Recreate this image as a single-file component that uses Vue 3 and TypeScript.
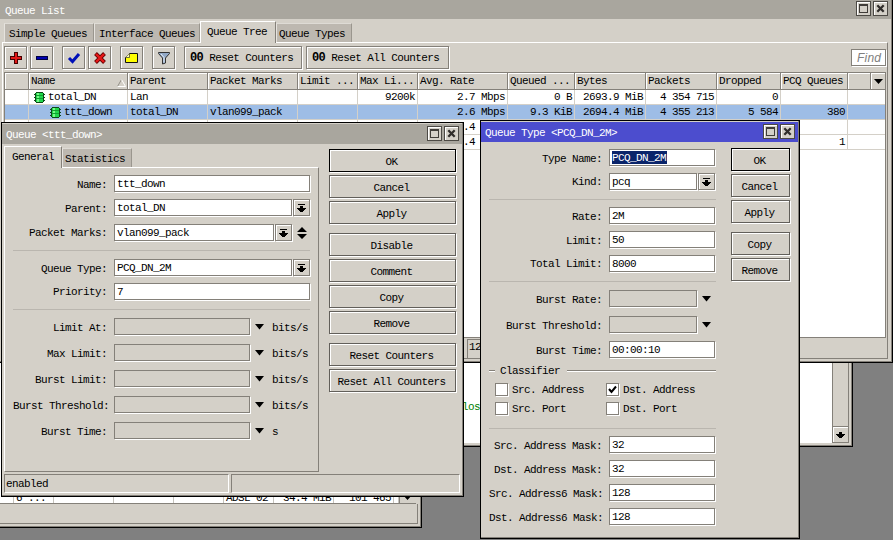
<script setup lang="ts">
interface Column { title: string; key: string; sorted?: boolean; right?: boolean }
interface Field { label: string; value?: string; kind: 'text' | 'drop' | 'multi' | 'off'; unit?: string; cls?: string; selected?: boolean }
interface Action { text: string; cls?: string }

const columns: Column[] = [
  { title: '', key: 'flag' },
  { title: 'Name', key: 'name', sorted: true },
  { title: 'Parent', key: 'parent' },
  { title: 'Packet Marks', key: 'marks' },
  { title: 'Limit ...', key: 'limit', right: true },
  { title: 'Max Li...', key: 'max', right: true },
  { title: 'Avg. Rate', key: 'rate', right: true },
  { title: 'Queued ...', key: 'queued', right: true },
  { title: 'Bytes', key: 'bytes', right: true },
  { title: 'Packets', key: 'packets', right: true },
  { title: 'Dropped', key: 'dropped', right: true },
  { title: 'PCQ Queues', key: 'pcq', right: true },
]

const rows: Record<string, string>[] = [
  { name: 'total_DN', parent: 'Lan', max: '9200k', rate: '2.7 Mbps', queued: '0 B', bytes: '2693.9 MiB', packets: '4 354 715', dropped: '0' },
  { name: 'ttt_down', parent: 'total_DN', marks: 'vlan099_pack', rate: '2.6 Mbps', queued: '9.3 KiB', bytes: '2694.4 MiB', packets: '4 355 213', dropped: '5 584', pcq: '380', child: 'y' },
  { name: '', rate: '.4', part: 'y' },
  { name: '', rate: '.4', pcq: '1', part: 'y' },
]

const queueFields: Field[] = [
  { label: 'Name', value: 'ttt_down', kind: 'text' },
  { label: 'Parent', value: 'total_DN', kind: 'drop', cls: 'gap7' },
  { label: 'Packet Marks', value: 'vlan099_pack', kind: 'multi', cls: 'rule17' },
  { label: 'Queue Type', value: 'PCQ_DN_2M', kind: 'drop' },
  { label: 'Priority', value: '7', kind: 'text', cls: 'rule17' },
  { label: 'Limit At', kind: 'off', unit: 'bits/s' },
  { label: 'Max Limit', kind: 'off', unit: 'bits/s' },
  { label: 'Burst Limit', kind: 'off', unit: 'bits/s' },
  { label: 'Burst Threshold', kind: 'off', unit: 'bits/s' },
  { label: 'Burst Time', kind: 'off', unit: 's' },
]

const queueActions: Action[] = [
  { text: 'OK', cls: 'primary' }, { text: 'Cancel' }, { text: 'Apply', cls: 'last' },
  { text: 'Disable' }, { text: 'Comment' }, { text: 'Copy' }, { text: 'Remove', cls: 'last' },
  { text: 'Reset Counters' }, { text: 'Reset All Counters' },
]

const typeFields: Field[] = [
  { label: 'Type Name', value: 'PCQ_DN_2M', kind: 'text', selected: true },
  { label: 'Kind', value: 'pcq', kind: 'drop', cls: 'rule16' },
  { label: 'Rate', value: '2M', kind: 'text' },
  { label: 'Limit', value: '50', kind: 'text' },
  { label: 'Total Limit', value: '8000', kind: 'text', cls: 'rule17' },
  { label: 'Burst Rate', kind: 'off' },
  { label: 'Burst Threshold', kind: 'off', cls: 'gap7' },
  { label: 'Burst Time', value: '00:00:10', kind: 'text' },
]

const maskFields = [
  { label: 'Src. Address Mask', value: '32' },
  { label: 'Dst. Address Mask', value: '32' },
  { label: 'Src. Address6 Mask', value: '128' },
  { label: 'Dst. Address6 Mask', value: '128' },
]

const typeActions: Action[] = [
  { text: 'OK', cls: 'primary' }, { text: 'Cancel' }, { text: 'Apply', cls: 'last' },
  { text: 'Copy' }, { text: 'Remove' },
]

const checks = [
  { text: 'Src. Address', on: false }, { text: 'Dst. Address', on: true },
  { text: 'Src. Port', on: false }, { text: 'Dst. Port', on: false },
]
</script>

<template>
  <div class="desktop">
    <section class="window traffic">
      <div class="traffic-row">
        <span></span><span>6 ...</span><span></span><span></span><span></span><span>ADSL 02</span><span class="num">34.4 MiB</span><span class="num">101 465</span><span></span>
        <i class="scroll-end"><svg width="9" height="9" viewBox="0 0 9 9"><path d="M3 0h3v3h3L4.5 8 0 3h3z" /></svg></i>
      </div>
      <div class="traffic-foot"></div>
    </section>

    <section class="window terminal">
      <div class="term-text"><span>los</span></div>
      <div class="scrollbar">
        <i class="scroll-btn"><svg width="9" height="7" viewBox="0 0 9 7" shape-rendering="crispEdges"><path d="M3 0h3v2h3v1h-1v1h-1v1h-1v1h-3v-1h-1v-1h-1v-1h-1v-1h3z" /></svg></i>
      </div>
    </section>

    <section class="window list">
      <header class="title">
        <span>Queue List</span>
        <i class="wbtn"><svg width="11" height="11" viewBox="0 0 11 11" shape-rendering="crispEdges"><path d="M1 1h9v9h-9zM2 3v6h7v-6z" fill-rule="evenodd" fill="#403d39" /></svg></i>
        <i class="wbtn"><svg width="11" height="11" viewBox="0 0 11 11"><path d="M2.3 2.3l6.4 6.4M8.7 2.3l-6.4 6.4" stroke="#302d2b" stroke-width="2.3" /></svg></i>
      </header>
      <nav class="tabs">
        <span class="t1">Simple Queues</span><span class="t2">Interface Queues</span><span class="t3 active">Queue Tree</span><span class="t4">Queue Types</span>
      </nav>
      <div class="list-body">
        <div class="toolbar">
          <button class="tool"><svg width="14" height="14" viewBox="0 0 14 14" shape-rendering="crispEdges"><path d="M5 1h4v4h4v4h-4v4h-4v-4h-4v-4h4z" fill="#400" /><path d="M6 2h2v4h4v2h-4v4h-2v-4h-4v-2h4z" fill="#e01818" /></svg></button>
          <button class="tool wide-gap"><svg width="14" height="14" viewBox="0 0 14 14" shape-rendering="crispEdges"><path d="M1 5h12v4h-12z" fill="#000040" /><path d="M2 6h10v2h-10z" fill="#0000b0" /></svg></button>
          <button class="tool"><svg width="14" height="14" viewBox="0 0 14 14"><path d="M2 7l3.5 3.5L12 3" fill="none" stroke="#0010b8" stroke-width="3" /></svg></button>
          <button class="tool wide-gap"><svg width="14" height="14" viewBox="0 0 14 14"><path d="M2.5 2.5l9 9M11.5 2.5l-9 9" stroke="#600" stroke-width="4" /><path d="M3 3l8 8M11 3l-8 8" stroke="#e81818" stroke-width="2.4" /></svg></button>
          <button class="tool wide-gap"><svg width="14" height="14" viewBox="0 0 14 14"><path d="M4.5 2.5h8v9h-12v-5z" fill="#ff0" stroke="#111" /><path d="M4.5 2.5v4h-4" fill="#ffffb0" stroke="#333" stroke-width=".7" /></svg></button>
          <button class="tool wide-gap"><svg width="14" height="14" viewBox="0 0 14 14"><path d="M1.5 1.5h11v1l-4 4.5v5l-3 1v-6l-4-4.5z" fill="#93a9c6" stroke="#333" /><path d="M4 3l3 3.5v5" fill="none" stroke="#e4edf8" /></svg></button>
          <button class="tool counter"><b>00</b><span>Reset Counters</span></button>
          <button class="tool counter all"><b>00</b><span>Reset All Counters</span></button>
          <span class="find">Find</span>
        </div>
        <div class="table">
          <div class="tr head">
            <span v-for="c in columns" :key="c.key">{{ c.title }}<svg v-if="c.sorted" class="sort" width="9" height="8" viewBox="0 0 9 8"><path d="M.5 7.5L4.5.5" fill="none" stroke="#928e87" /><path d="M4.5.5l4 7h-8" fill="none" stroke="#fff" /></svg></span>
            <span></span>
            <span class="menu"><svg width="9" height="5" viewBox="0 0 9 5"><path d="M0 0h9L4.5 5z" /></svg></span>
          </div>
          <div v-for="(r, i) in rows" :key="i" class="tr" :class="{ chosen: i === 1 }">
            <span v-for="c in columns" :key="c.key" :class="{ right: c.right, name: c.key === 'name', child: r.child, part: r.part && c.key === 'rate' }">
              <svg v-if="c.key === 'name'" class="queue-icon" width="11" height="11" viewBox="0 0 11 11" shape-rendering="crispEdges"><path d="M2 0h7v1h1v9h-1v1h-7v-1h-1v-9h1zM0 2h1v1h-1zM0 5h1v1h-1zM0 8h1v1h-1zM10 2h1v1h-1zM10 5h1v1h-1zM10 8h1v1h-1z" fill="#0c4a18" /><path d="M2 1h7v9h-7z" fill="#20d84c" /><path d="M3 1h2v9h-2z" fill="#78f888" /><path d="M2 3h7v1h-7zM2 6h7v1h-7z" fill="#12a030" /></svg>{{ r[c.key] }}</span>
            <span class="tail"></span>
          </div>
        </div>
        <footer class="list-status"><span></span><span>12</span></footer>
      </div>
    </section>

    <section class="window queue">
      <header class="title">
        <span>Queue &lt;ttt_down&gt;</span>
        <i class="wbtn"><svg width="11" height="11" viewBox="0 0 11 11" shape-rendering="crispEdges"><path d="M1 1h9v9h-9zM2 3v6h7v-6z" fill-rule="evenodd" fill="#403d39" /></svg></i>
        <i class="wbtn"><svg width="11" height="11" viewBox="0 0 11 11"><path d="M2.3 2.3l6.4 6.4M8.7 2.3l-6.4 6.4" stroke="#302d2b" stroke-width="2.3" /></svg></i>
      </header>
      <div class="queue-main">
        <div class="queue-left">
          <nav class="tabs"><span class="q1 active">General</span><span class="q2">Statistics</span></nav>
          <div class="form">
            <div v-for="f in queueFields" :key="f.label" class="row" :class="['is-' + f.kind, f.cls]">
              <label>{{ f.label }}:</label>
              <span class="input">{{ f.value }}</span>
              <i v-if="f.kind === 'drop' || f.kind === 'multi'" class="drop"><svg width="9" height="9" viewBox="0 0 9 9" shape-rendering="crispEdges"><path d="M1 0h7v1h-7zM3 2h3v2h3v1h-1v1h-1v1h-1v1h-3v-1h-1v-1h-1v-1h-1v-1h3z" /></svg></i>
              <svg v-if="f.kind === 'multi'" class="spin" width="10" height="12" viewBox="0 0 10 12"><path d="M0 5L5 0l5 5zM0 7h10l-5 5z" /></svg>
              <svg v-if="f.kind === 'off'" class="caret" width="9" height="6" viewBox="0 0 9 6"><path d="M0 0h9L4.5 5.5z" /></svg>
              <span v-if="f.unit" class="unit">{{ f.unit }}</span>
            </div>
          </div>
        </div>
        <div class="actions"><button v-for="a in queueActions" :key="a.text" :class="a.cls">{{ a.text }}</button></div>
      </div>
      <footer class="queue-status"><span>enabled</span><span></span></footer>
    </section>

    <section class="window type">
      <header class="title">
        <span>Queue Type &lt;PCQ_DN_2M&gt;</span>
        <i class="wbtn"><svg width="11" height="11" viewBox="0 0 11 11" shape-rendering="crispEdges"><path d="M1 1h9v9h-9zM2 3v6h7v-6z" fill-rule="evenodd" fill="#403d39" /></svg></i>
        <i class="wbtn"><svg width="11" height="11" viewBox="0 0 11 11"><path d="M2.3 2.3l6.4 6.4M8.7 2.3l-6.4 6.4" stroke="#302d2b" stroke-width="2.3" /></svg></i>
      </header>
      <div class="type-main">
        <div class="form">
          <div v-for="f in typeFields" :key="f.label" class="row" :class="['is-' + f.kind, f.cls]">
            <label>{{ f.label }}:</label>
            <span class="input"><mark v-if="f.selected">{{ f.value }}</mark><template v-else>{{ f.value }}</template></span>
            <i v-if="f.kind === 'drop'" class="drop"><svg width="9" height="9" viewBox="0 0 9 9" shape-rendering="crispEdges"><path d="M1 0h7v1h-7zM3 2h3v2h3v1h-1v1h-1v1h-1v1h-3v-1h-1v-1h-1v-1h-1v-1h3z" /></svg></i>
            <svg v-if="f.kind === 'off'" class="caret" width="9" height="6" viewBox="0 0 9 6"><path d="M0 0h9L4.5 5.5z" /></svg>
          </div>
          <div class="legend"><i></i><span>Classifier</span><i></i></div>
          <div class="checks">
            <span v-for="c in checks" :key="c.text"><i class="box"><svg v-if="c.on" width="9" height="9" viewBox="0 0 9 9"><path d="M1 4l2.5 3L8 1.5" fill="none" stroke="#000" stroke-width="2" /></svg></i>{{ c.text }}</span>
          </div>
          <div class="masks">
            <div v-for="m in maskFields" :key="m.label" class="row"><label>{{ m.label }}:</label><span class="input">{{ m.value }}</span></div>
          </div>
        </div>
        <div class="actions"><button v-for="a in typeActions" :key="a.text" :class="a.cls">{{ a.text }}</button></div>
      </div>
    </section>
  </div>
</template>

<style>
body { overflow: hidden; }
</style>

<style scoped>
.desktop, .desktop * { box-sizing: border-box; }
.desktop {
  position: relative; width: 893px; height: 540px; overflow: hidden; background: #808080; color: #000;
  font: 11px/14px "Liberation Mono", "Noto Sans CJK SC", monospace; letter-spacing: -.6px;
}
.desktop span, .desktop label, button { white-space: pre; }
i { display: block; font-style: normal; }
svg { display: block; flex: none; }
button { margin: 0; padding: 0; font: inherit; letter-spacing: inherit; color: inherit; }
.window { position: absolute; display: flex; flex-direction: column; background: #d4d0c8; }

.title { display: flex; align-items: center; flex: none; color: #fff; background: #a9a69e; gap: 2px; }
.title span { flex: 1; }
.wbtn { width: 15px; height: 15px; padding: 1px; background: #d4d0c8; border: 1px solid #4c4944; box-shadow: inset 1px 1px #fff; }
.tabs { display: flex; align-items: flex-end; flex: none; }
.tabs span { background: #bdb8b0; border-top: 1px solid #dedbd5; border-left: 1px solid #e6e3de; border-right: 1px solid #9a968e; }
.tabs .active { background: #d4d0c8; border-color: #fff #848079 #fff #fff; }

/* queue list */
.list { left: 0; top: 0; width: 893px; height: 363px; border-right: 1px solid #000; border-bottom: 1px solid #000; box-shadow: inset -1px -1px #848079; }
.list > .title { height: 19px; padding: 0 3px 3px 5px; margin-right: 1px; }
.list > .title span { padding-top: 5px; }
.list > .tabs { height: 23px; padding-left: 4px; z-index: 1; }
.list > .tabs span { height: 19px; padding: 3px 0 0 5px; }
.list > .tabs .t1 { width: 90px; padding-left: 4px; }
.list > .tabs .t2 { width: 106px; padding-left: 4px; }
.list > .tabs .t3 { width: 76px; height: 22px; padding: 3px 0 0 6px; margin-bottom: -1px; }
.list > .tabs .t4 { width: 76px; padding-left: 2px; }
.list-body { flex: 1; display: flex; flex-direction: column; margin: 0 4px 3px 2px; border: 1px solid #fff; border-right-color: #848079; border-bottom-color: #848079; padding: 3px 1px 0 1px; }
.toolbar { display: flex; height: 26px; flex: none; }
.tool { width: 23px; height: 23px; margin-right: 3px; display: flex; align-items: center; justify-content: center; background: #d4d0c8; border: 1px solid #848079; box-shadow: inset 1px 1px #fff, 1px 1px #fff; }
.tool.wide-gap { margin-right: 9px; }
.tool.counter { width: 118px; margin-right: 4px; padding: 1px 0 0 5px; justify-content: flex-start; }
.tool.counter.all { width: 143px; }
.tool b { font-size: 12px; letter-spacing: -.6px; margin-right: 6px; }
.find { width: 35px; height: 17px; margin: 3px 0 0 auto; border: 1px solid #848079; background: #fff; color: #808080; font: italic 12px/16px "Liberation Sans", Arial, sans-serif; letter-spacing: .2px; padding-left: 5px; box-shadow: 1px 1px #fff; }
.table { flex: 1; border: 1px solid #848079; background: #fff; overflow: hidden; }
.tr { display: grid; height: 15px; grid-template-columns: 24px 99px 80px 90px 60px 60px 90px 67px 71px 71px 64px 67px 38px; }
.tr > span { border-right: 1px solid #d4d0c8; border-bottom: 1px solid #d4d0c8; padding-left: 2px; line-height: 14px; display: flex; overflow: hidden; }
.tr > .right { justify-content: flex-end; padding-right: 2px; }
.tr > .right.part { padding-right: 32px; }
.tr > .name { padding-left: 5px; gap: 3px; align-items: center; }
.tr > .name.child { padding-left: 21px; }
.tr.chosen { background: #9ebde6; }
.tr.head { height: 17px; background: #d4d0c8; grid-template-columns: 24px 99px 80px 90px 60px 60px 90px 67px 71px 71px 64px 67px 23px 15px; }
.tr.head > span { border-color: #848079; box-shadow: inset 1px 1px #fff; line-height: 17px; }
.sort { margin: 6px 1px 0 auto; }
.tr.head > .menu { align-items: center; border-right: 0; padding-left: 3px; }
.list-status { height: 20px; flex: none; display: flex; }
.list-status span:first-child { width: 463px; }
.list-status span:last-child { margin-top: 1px; border-left: 1px solid #848079; border-top: 1px solid #848079; padding-left: 1px; }

/* windows below */
.terminal { left: 300px; top: 340px; width: 553px; height: 107px; flex-direction: row; border: 1px solid #000; padding: 0 3px 3px 0; box-shadow: inset -1px -1px #848079; }
.term-text { flex: 1; background: #fff; color: #008000; padding: 59px 0 0 161px; }
.scrollbar { width: 17px; border-left: 1px solid #848079; border-right: 1px solid #848079; display: flex; flex-direction: column; justify-content: flex-end; }
.scroll-btn { height: 17px; border: 1px solid #848079; border-width: 1px 0; box-shadow: inset 1px 1px #fff; padding: 5px 0 0 3px; }
.traffic { left: -1px; top: 300px; width: 423px; height: 228px; border: 1px solid #000; justify-content: flex-end; box-shadow: inset -1px -1px #848079; }
.traffic-row { display: grid; flex: 1; align-items: end; margin-right: 5px; background: #fff; grid-template-columns: 14px 40px 60px 60px 50px 50px 60px 60px 5px 1fr; border-bottom: 1px solid #848079; }
.traffic-row span { height: 12px; line-height: 15px; border-right: 1px solid #c6c3bd; padding: 0 2px; }
.traffic-row .num { text-align: right; }
.scroll-end { height: 16px; background: #d4d0c8; padding: 5px 0 0 3px; border-left: 1px solid #848079; }
.traffic-foot { height: 20px; margin: 0 3px 3px 0; border-right: 1px solid #848079; border-bottom: 1px solid #848079; }

/* shared form pieces */
.row { display: flex; height: 18px; margin-bottom: 6px; align-items: center; }
.row label { text-align: right; flex: none; padding-top: 1px; }
.input { flex: none; height: 17px; margin-bottom: 1px; border: 1px solid #848079; background: #fff; box-shadow: 1px 1px #fff; line-height: 16px; padding-left: 2px; }
.is-off { margin-bottom: 8px; }
.is-off .input { background: transparent; }
.row.gap7 { margin-bottom: 7px; }
.row.rule17, .row.rule16 { height: 27px; margin-bottom: 8px; padding-bottom: 9px; border-bottom: 1px solid #bab6af; }
.row.rule16 { margin-bottom: 7px; }
.drop { width: 17px; height: 17px; flex: none; margin: 0 0 1px 1px; border: 1px solid #848079; box-shadow: inset 1px 1px #fff, 1px 1px #fff; padding: 4px 0 0 3px; }
.spin { margin-left: 5px; }
.caret { margin-left: 5px; }
.unit { margin-left: 8px; padding-top: 1px; }
mark { background: #0a246a; color: #fff; display: block; width: 55px; height: 13px; line-height: 14px; margin-top: 1px; }
.actions { display: flex; flex-direction: column; gap: 3px; }
.actions button { height: 23px; flex: none; background: #d4d0c8; border: 1px solid #625f5a; box-shadow: inset 1px 1px #fff, 1px 1px #fff; line-height: 21px; padding: 2px 2px 0 0; }
.actions .primary { border-color: #000; }
.actions .last { margin-bottom: 6px; }

/* queue dialog */
.queue { left: 1px; top: 122px; width: 463px; height: 375px; border: 1px solid #000; box-shadow: inset -1px -1px #848079; }
.queue > .title, .type > .title { height: 20px; margin: 1px 1px 0 0; padding: 0 3px 2px 4px; }
.queue > .title span, .type > .title span { padding-top: 4px; }
.queue-main { display: flex; height: 328px; flex: none; padding: 2px 0 0 2px; }
.queue-left { width: 315px; display: flex; flex-direction: column; }
.queue-left .tabs { height: 21px; }
.queue-left .tabs span { height: 19px; padding: 3px 0 0 2px; }
.queue-left .q1.active { width: 58px; height: 22px; margin-bottom: -1px; padding: 3px 0 0 7px; z-index: 1; }
.queue-left .q2 { width: 70px; }
.queue-left .form { flex: 1; border: 1px solid #fff; border-right-color: #848079; border-bottom-color: #848079; padding: 7px 8px 0 8px; }
.queue-left label { width: 94px; margin-right: 7px; }
.queue .input { width: 196px; }
.queue .is-drop .input { width: 178px; }
.queue .is-multi .input { width: 160px; }
.queue .is-off .input { width: 136px; }
.queue .actions { width: 127px; margin-left: 10px; padding-top: 3px; }
.queue-status { display: flex; height: 19px; margin: 2px 3px 0 2px; gap: 2px; }
.queue-status span { border: 1px solid #848079; border-right-color: #fff; border-bottom-color: #fff; padding: 2px 0 0 1px; width: 225px; }
.queue-status span:last-child { flex: 1; }

/* queue type dialog */
.type { left: 480px; top: 120px; width: 320px; height: 419px; border: 1px solid #000; box-shadow: inset -1px -1px #848079; }
.type > .title { background: #4c4dce; }
.type-main { display: flex; padding: 7px 0 0 8px; }
.type .form { width: 227px; }
.type label { width: 113px; margin-right: 7px; }
.type .input { width: 106px; }
.type .is-drop .input, .type .is-off .input { width: 88px; }
.type .actions { width: 59px; margin: -1px 0 0 15px; }
.legend { display: flex; align-items: center; height: 14px; margin: -1px 0 0 0; }
.legend i { width: 6px; height: 2px; background: #848079; border-bottom: 1px solid #fff; }
.legend span { width: 72px; padding: 0 0 0 5px; }
.legend i:last-child { flex: 1; }
.checks { display: grid; grid-template-columns: 111px 1fr; row-gap: 6px; margin: 5px 0 0 6px; padding-bottom: 13px; }
.checks span { display: flex; align-items: center; height: 13px; }
.box { width: 13px; height: 13px; margin-right: 4px; padding: 1px; background: #fff; border: 1px solid #848079; box-shadow: 1px 1px #fff; }
.masks { border-top: 1px solid #bab6af; padding-top: 7px; }
</style>
